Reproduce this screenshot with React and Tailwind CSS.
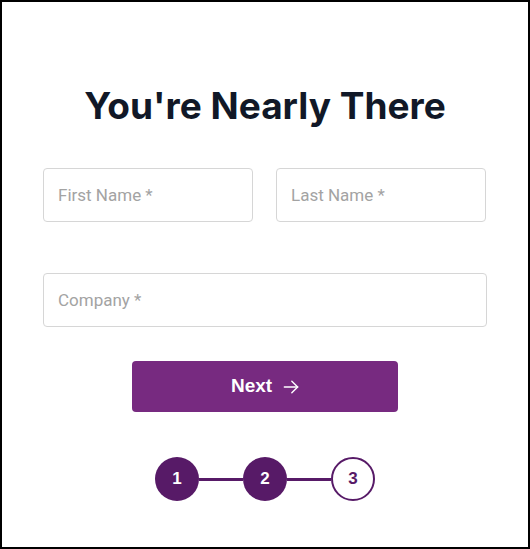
import React from "react";

const Step = ({ n, active }) => (
  <div
    className={
      "w-[44px] h-[44px] rounded-full flex items-center justify-center text-[17px] font-bold " +
      (active
        ? "bg-[#571a67] text-white"
        : "bg-white border-2 border-[#571a67] text-[#571a67]")
    }
  >
    {n}
  </div>
);

const App = () => {
  return (
    <div className="w-[530px] h-[549px] border-2 border-black bg-white font-['Roboto',sans-serif]">
      <div className="flex flex-col items-center pt-[81px] px-[41px]">
        <h1 className="text-[37px] leading-[46px] font-bold text-[#111827] font-['Inter',sans-serif]">
          You're Nearly There
        </h1>
        <div className="w-full flex gap-[23px] mt-[39px]">
          <input
            className="w-[210px] h-[54px] border border-[#d6d6d6] rounded-[4px] px-[14px] text-[17px] placeholder-[#a3a3a3] outline-none"
            placeholder="First Name *"
          />
          <input
            className="w-[210px] h-[54px] border border-[#d6d6d6] rounded-[4px] px-[14px] text-[17px] placeholder-[#a3a3a3] outline-none"
            placeholder="Last Name *"
          />
        </div>
        <input
          className="w-full h-[54px] mt-[51px] border border-[#d6d6d6] rounded-[4px] px-[14px] text-[17px] placeholder-[#a3a3a3] outline-none"
          placeholder="Company *"
        />
        <button className="mt-[34px] w-[266px] h-[51px] rounded-[4px] bg-[#772a80] text-white text-[19px] font-bold flex items-center justify-center gap-[9px] pl-[2px] font-['Liberation_Sans',sans-serif]">
          Next
          <svg width="20" height="20" viewBox="0 0 24 24" fill="none" stroke="currentColor" strokeWidth="1.7" strokeLinecap="round" strokeLinejoin="round">
            <path d="M4 12h16" />
            <path d="M13 5l7 7-7 7" />
          </svg>
        </button>
        <div className="flex items-center mt-[45px] font-['Liberation_Sans',sans-serif]">
          <Step n="1" active />
          <div className="w-[44px] h-[3px] bg-[#571a67]" />
          <Step n="2" active />
          <div className="w-[44px] h-[3px] bg-[#571a67]" />
          <Step n="3" />
        </div>
      </div>
    </div>
  );
};

export default App;
